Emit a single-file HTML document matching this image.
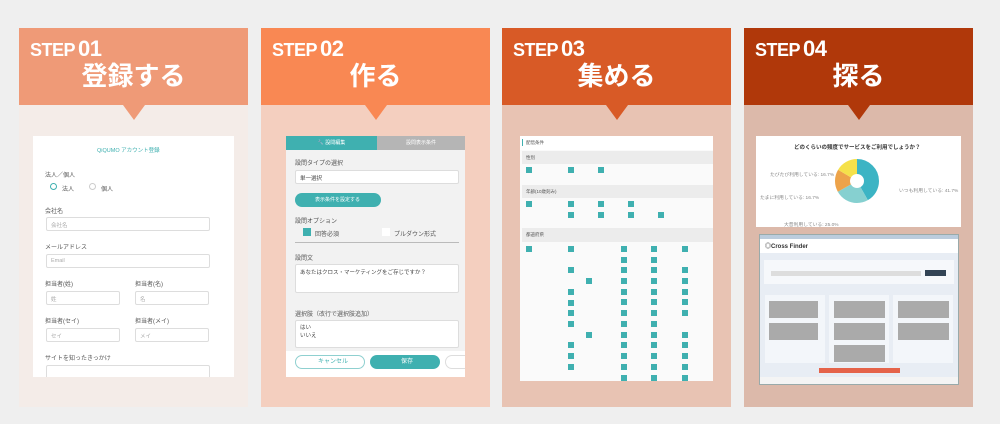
<!DOCTYPE html>
<html><head><meta charset="utf-8"><style>
*{margin:0;padding:0;box-sizing:border-box}
body{width:1000px;height:424px;background:#efefef;font-family:"Liberation Sans","Noto Sans CJK JP",sans-serif;position:relative;overflow:hidden}
.card{position:absolute;top:28px;width:229px;height:379px}
.hd{position:absolute;left:0;top:0;width:100%;height:77px;color:#fff}
.step{position:absolute;left:11px;top:8px;font-size:18px;font-weight:bold;letter-spacing:-0.5px}
.step b{font-size:22px;margin-left:3px}
.ttl{position:absolute;left:0;right:0;top:30px;text-align:center;font-size:26px;line-height:34px;font-weight:bold;font-family:"Noto Sans CJK JP",sans-serif}
.tri{position:absolute;top:77px;left:104px;width:0;height:0;border-left:11px solid transparent;border-right:11px solid transparent;border-top:15px solid}
.p{position:absolute;background:#fff;overflow:hidden;font-size:6px;color:#555}
.a{position:absolute;white-space:nowrap}
.in{position:absolute;border:1px solid #ddd;border-radius:2px;background:#fff;color:#aaa;padding:3px 4px;font-size:5.5px}
.cb{position:absolute;width:6px;height:6px;background:#3fb0b0}
</style></head><body>

<!-- card 1 -->
<div class="card" style="left:19px;background:#f4ece8">
 <div class="hd" style="background:#ef9a77"><div class="step">STEP<b>01</b></div><div class="ttl">登録する</div></div>
 <div class="tri" style="border-top-color:#ef9a77"></div>
 <div class="p" style="left:14px;top:108px;width:201px;height:241px">
  <div class="a" style="left:64px;top:10px;color:#3fb0b0;font-size:5.5px">QiQUMO アカウント登録</div>
  <div class="a" style="left:12px;top:34px">法人／個人</div>
  <div class="a" style="left:17px;top:47px;width:7px;height:7px;border:1px solid #3fb0b0;border-radius:50%"></div><div class="a" style="left:29px;top:48px">法人</div>
  <div class="a" style="left:56px;top:47px;width:7px;height:7px;border:1px solid #ccc;border-radius:50%"></div><div class="a" style="left:68px;top:48px">個人</div>
  <div class="a" style="left:12px;top:70px">会社名</div>
  <div class="in" style="left:13px;top:81px;width:164px;height:14px">会社名</div>
  <div class="a" style="left:12px;top:106px">メールアドレス</div>
  <div class="in" style="left:13px;top:118px;width:164px;height:14px">Email</div>
  <div class="a" style="left:12px;top:143px">担当者(姓)</div><div class="a" style="left:102px;top:143px">担当者(名)</div>
  <div class="in" style="left:13px;top:155px;width:74px;height:14px">姓</div><div class="in" style="left:102px;top:155px;width:74px;height:14px">名</div>
  <div class="a" style="left:12px;top:180px">担当者(セイ)</div><div class="a" style="left:102px;top:180px">担当者(メイ)</div>
  <div class="in" style="left:13px;top:192px;width:74px;height:14px">セイ</div><div class="in" style="left:102px;top:192px;width:74px;height:14px">メイ</div>
  <div class="a" style="left:12px;top:217px">サイトを知ったきっかけ</div>
  <div class="in" style="left:13px;top:229px;width:164px;height:14px"></div>
 </div>
</div>

<!-- card 2 -->
<div class="card" style="left:261px;background:#f4cfbf">
 <div class="hd" style="background:#f98853"><div class="step">STEP<b>02</b></div><div class="ttl">作る</div></div>
 <div class="tri" style="border-top-color:#f98853"></div>
 <div class="p" style="left:25px;top:108px;width:179px;height:241px;background:#f2f2f2">
  <div class="a" style="left:0;top:0;width:91px;height:14px;background:#3fb0b0;color:#fff;text-align:center;line-height:14px;font-size:5px">🔧 設問編集</div>
  <div class="a" style="left:91px;top:0;width:88px;height:14px;background:#b5b5b5;color:#fff;text-align:center;line-height:14px;font-size:5px">設問表示条件</div>
  <div class="a" style="left:9px;top:22px">設問タイプの選択</div>
  <div class="in" style="left:9px;top:34px;width:164px;height:14px;color:#444">単一選択</div>
  <div class="a" style="left:9px;top:57px;width:86px;height:14px;border-radius:7px;background:#3fb0b0;color:#fff;line-height:14px;padding-left:20px;font-size:5px">表示条件を設定する</div>
  <div class="a" style="left:9px;top:80px">設問オプション</div>
  <div class="cb" style="left:17px;top:92px;width:8px;height:8px"></div><div class="a" style="left:29px;top:93px">回答必須</div>
  <div class="a" style="left:96px;top:92px;width:8px;height:8px;background:#fff"></div><div class="a" style="left:108px;top:93px">プルダウン形式</div>
  <div class="a" style="left:9px;top:106px;width:164px;height:1px;background:#bbb"></div>
  <div class="a" style="left:9px;top:117px">設問文</div>
  <div class="in" style="left:9px;top:128px;width:164px;height:29px;color:#444">あなたはクロス・マーケティングをご存じですか？</div>
  <div class="a" style="left:9px;top:173px">選択肢（改行で選択肢追加）</div>
  <div class="in" style="left:9px;top:184px;width:164px;height:28px;color:#444;line-height:8px">はい<br>いいえ</div>
  <div class="a" style="left:0;top:215px;width:179px;height:26px;background:#fff"></div>
  <div class="a" style="left:9px;top:219px;width:70px;height:14px;border:1px solid #8fd0d0;border-radius:7px;line-height:12px;padding-left:22px;color:#3fb0b0">キャンセル</div>
  <div class="a" style="left:84px;top:219px;width:70px;height:14px;background:#3fb0b0;border-radius:7px;line-height:14px;padding-left:31px;color:#fff">保存</div>
  <div class="a" style="left:159px;top:219px;width:30px;height:14px;border:1px solid #ddd;border-radius:7px"></div>
 </div>
</div>

<!-- card 3 -->
<div class="card" style="left:502px;background:#e8c3b3">
 <div class="hd" style="background:#d85a26"><div class="step">STEP<b>03</b></div><div class="ttl">集める</div></div>
 <div class="tri" style="border-top-color:#d85a26"></div>
 <div class="p" style="left:18px;top:108px;width:193px;height:245px;background:#fafafa;font-size:4.5px">
  <div class="a" style="left:0;top:0;width:193px;height:14px;background:#fff"></div>
  <div class="a" style="left:2px;top:3px;width:1px;height:7px;background:#3fb0b0"></div><div class="a" style="left:6px;top:4px">配信条件</div>
  <div class="a" style="left:2px;top:15px;width:191px;height:13px;background:#ececec;padding:4px">性別</div>
  <div class="cb" style="left:6px;top:31px"></div><div class="cb" style="left:48px;top:31px"></div><div class="cb" style="left:78px;top:31px"></div>
  <div class="a" style="left:2px;top:49px;width:191px;height:13px;background:#ececec;padding:4px">年齢(10歳刻み)</div>
  <div class="cb" style="left:6px;top:65px"></div><div class="cb" style="left:48px;top:65px"></div><div class="cb" style="left:78px;top:65px"></div><div class="cb" style="left:108px;top:65px"></div>
  <div class="cb" style="left:48px;top:76px"></div><div class="cb" style="left:78px;top:76px"></div><div class="cb" style="left:108px;top:76px"></div><div class="cb" style="left:138px;top:76px"></div>
  <div class="a" style="left:2px;top:92px;width:191px;height:14px;background:#ececec;padding:4px">都道府県</div>
  <div class="cb" style="left:6px;top:110px"></div>
  <svg class="a" style="left:0;top:108px" width="193" height="140">
   <g fill="#3fb0b0">
    <rect x="48" y="2" width="6" height="6"/><rect x="48" y="23" width="6" height="6"/><rect x="66" y="34" width="6" height="6"/><rect x="48" y="45" width="6" height="6"/><rect x="48" y="56" width="6" height="6"/><rect x="48" y="66" width="6" height="6"/><rect x="48" y="77" width="6" height="6"/><rect x="66" y="88" width="6" height="6"/><rect x="48" y="98" width="6" height="6"/><rect x="48" y="109" width="6" height="6"/><rect x="48" y="120" width="6" height="6"/>
    <g id="r"><rect x="101" y="2" width="6" height="6"/><rect x="131" y="2" width="6" height="6"/><rect x="162" y="2" width="6" height="6"/></g>
    <rect x="101" y="13" width="6" height="6"/><rect x="131" y="13" width="6" height="6"/>
    <use href="#r" y="21"/><use href="#r" y="32"/><use href="#r" y="43"/><use href="#r" y="53"/><use href="#r" y="64"/>
    <rect x="101" y="77" width="6" height="6"/><rect x="131" y="77" width="6" height="6"/>
    <use href="#r" y="86"/><use href="#r" y="96"/><use href="#r" y="107"/><use href="#r" y="118"/><use href="#r" y="129"/>
   </g>
  </svg>
 </div>
</div>

<!-- card 4 -->
<div class="card" style="left:744px;background:#dcb9aa">
 <div class="hd" style="background:#b0380a"><div class="step">STEP<b>04</b></div><div class="ttl">探る</div></div>
 <div class="tri" style="border-top-color:#b0380a"></div>
 <div class="p" style="left:12px;top:108px;width:205px;height:91px;font-size:4.8px;color:#888">
  <div class="a" style="left:38px;top:7px;font-weight:bold;color:#333;font-size:5.5px">どのくらいの頻度でサービスをご利用でしょうか？</div>
  <svg class="a" style="left:77px;top:21px" width="48" height="48" viewBox="-24 -24 48 48">
   <circle r="14.5" fill="none" stroke="#3cb4c4" stroke-width="15" stroke-dasharray="38 91.1" transform="rotate(-90)"/>
   <circle r="14.5" fill="none" stroke="#86d0d0" stroke-width="15" stroke-dasharray="0 38 22.8 91.1" transform="rotate(-90)"/>
   <circle r="14.5" fill="none" stroke="#eda34a" stroke-width="15" stroke-dasharray="0 60.8 15.2 91.1" transform="rotate(-90)"/>
   <circle r="14.5" fill="none" stroke="#f5e14a" stroke-width="15" stroke-dasharray="0 76 15.2 91.1" transform="rotate(-90)"/>
  </svg>
  <div class="a" style="left:14px;top:35px">たびたび利用している: 16.7%</div>
  <div class="a" style="left:143px;top:51px">いつも利用している: 41.7%</div>
  <div class="a" style="left:4px;top:58px">たまに利用している: 16.7%</div>
  <div class="a" style="left:28px;top:85px">大昔利用している: 25.0%</div>
 </div>
 <div class="p" style="left:15px;top:206px;width:200px;height:151px;background:#e8edf4;border:1px solid #9aa">
  <div class="a" style="left:0;top:0;width:200px;height:4px;background:#bcd"></div>
  <div class="a" style="left:0;top:4px;width:200px;height:14px;background:#fff"></div>
  <div class="a" style="left:5px;top:6px;font-size:6px;font-weight:bold;color:#333">◎Cross Finder</div>
  <div class="a" style="left:4px;top:25px;width:190px;height:24px;background:#f6f8fb"></div>
  <div class="a" style="left:11px;top:36px;width:150px;height:5px;background:#ddd"></div>
  <div class="a" style="left:165px;top:35px;width:21px;height:6px;background:#345"></div>
  <div class="a" style="left:5px;top:60px;width:60px;height:68px;background:#f3f6fa"></div>
  <div class="a" style="left:69px;top:60px;width:60px;height:68px;background:#f3f6fa"></div>
  <div class="a" style="left:133px;top:60px;width:60px;height:68px;background:#f3f6fa"></div>
  <div class="a" style="left:9px;top:66px;width:49px;height:17px;background:#aaa"></div>
  <div class="a" style="left:9px;top:88px;width:49px;height:17px;background:#aaa"></div>
  <div class="a" style="left:74px;top:66px;width:51px;height:17px;background:#aaa"></div>
  <div class="a" style="left:74px;top:88px;width:51px;height:17px;background:#aaa"></div>
  <div class="a" style="left:74px;top:110px;width:51px;height:17px;background:#aaa"></div>
  <div class="a" style="left:138px;top:66px;width:51px;height:17px;background:#aaa"></div>
  <div class="a" style="left:138px;top:88px;width:51px;height:17px;background:#aaa"></div>
  <div class="a" style="left:59px;top:133px;width:81px;height:5px;background:#e5634a"></div>
  <div class="a" style="left:0;top:142px;width:200px;height:9px;background:#f4f4f4"></div>
 </div>
</div>
</body></html>
